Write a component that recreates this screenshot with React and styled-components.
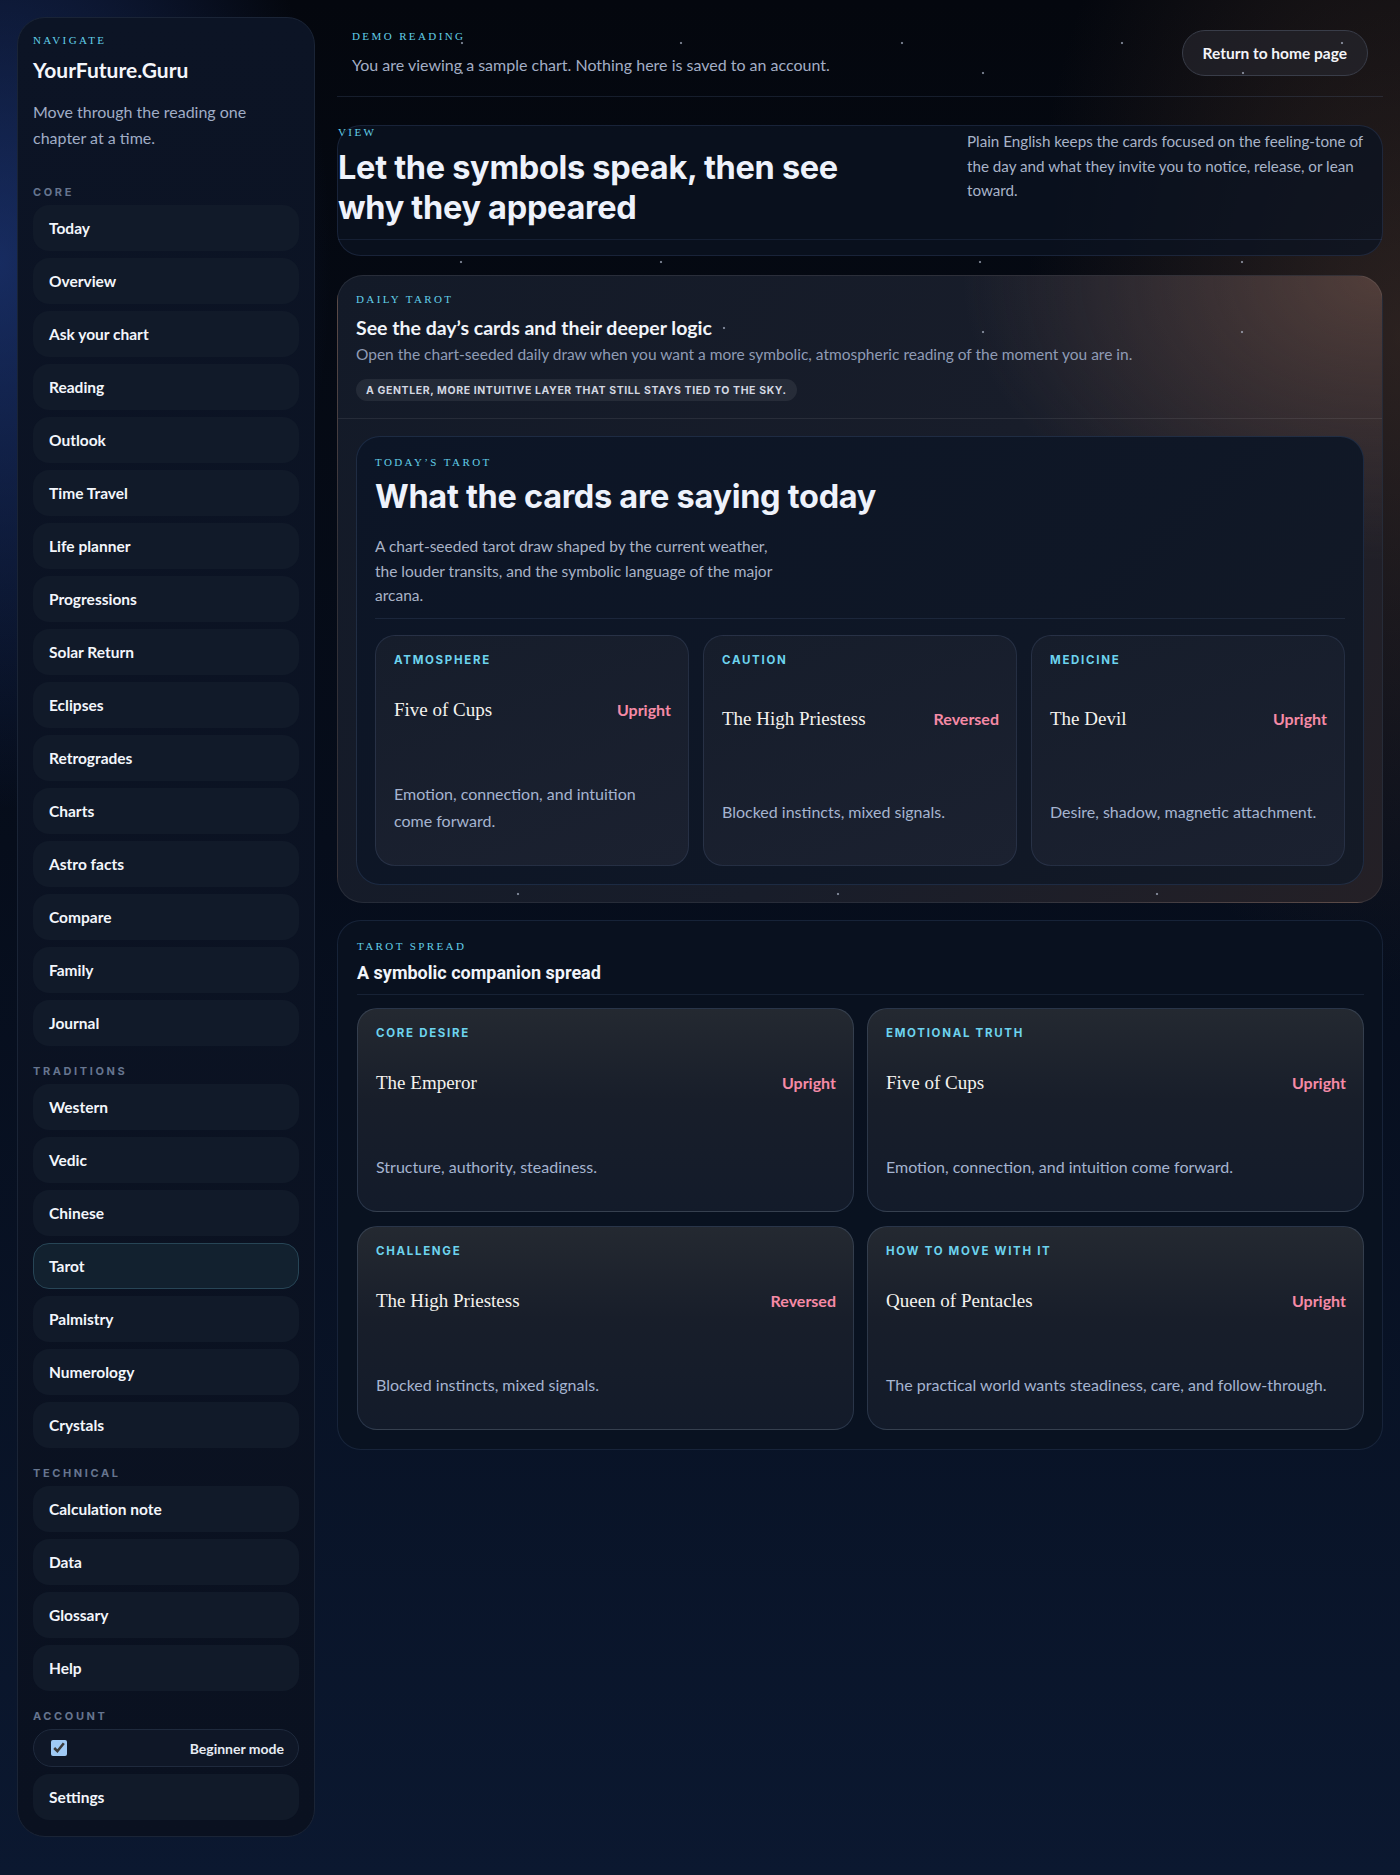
import React from 'react';
import styled, { createGlobalStyle } from 'styled-components';

const SANS = `"Lato", "Noto Sans", sans-serif`;
const HEAD = `"Inter", "Roboto", sans-serif`;
const SUBHEAD = `"Roboto", "Inter", sans-serif`;
const CAPS = `"Inter", "Roboto", sans-serif`;
const SERIF = `"Liberation Serif", "DejaVu Serif", serif`;

const GlobalStyle = createGlobalStyle`
  * { box-sizing: border-box; }
  html, body { margin: 0; padding: 0; }
  body {
    min-height: 1875px;
    font-family: ${SANS};
    color: #eef2f8;
    background:
      radial-gradient(ellipse 460px 760px at 0% 14%, rgba(38, 72, 160, 0.55), transparent 72%),
      radial-gradient(ellipse 520px 900px at 100% 18%, rgba(105, 72, 52, 0.38), transparent 72%),
      linear-gradient(180deg, #04070e 0%, #060d1b 45%, #0b1830 100%);
  }
`;

// tiny star specks that sit over the page
const starSpots = [
  [462, 43], [681, 43], [902, 43], [1122, 43], [1342, 43],
  [462, 73], [983, 73], [1243, 73],
  [461, 262], [661, 262], [980, 262], [1242, 262],
  [724, 328], [983, 332], [1242, 332],
  [518, 894], [838, 894], [1157, 894],
];

const Stars = styled.div`
  position: absolute;
  inset: 0;
  height: 1875px;
  pointer-events: none;
  background-image: ${starSpots
    .map(([x, y]) => `radial-gradient(circle at ${x}px ${y}px, rgba(200, 210, 230, 0.55) 0 1px, transparent 1.6px)`)
    .join(', ')};
  background-repeat: no-repeat;
`;

const Page = styled.div`
  position: relative;
  display: grid;
  grid-template-columns: 298px 1fr;
  column-gap: 22px;
  align-items: start;
  padding: 17px;
`;

/* ---------- Sidebar ---------- */

const Sidebar = styled.nav`
  padding: 16px 15px 16px;
  border-radius: 28px;
  border: 1px solid #1a2436;
  background: linear-gradient(180deg, #0c1425 0%, #0a1120 100%);
`;

const Eyebrow = styled.div`
  font-family: ${SERIF};
  font-size: 11px;
  line-height: 12px;
  letter-spacing: 2.4px;
  text-transform: uppercase;
  color: #62cfe8;
`;

const Brand = styled.div`
  margin-top: 10px;
  font-weight: 700;
  font-size: 21px;
  line-height: 28px;
  color: #f4f6fb;
`;

const SideIntro = styled.p`
  margin: 15px 0 0;
  font-size: 16px;
  line-height: 26px;
  color: #a0adc6;
`;

const GroupLabel = styled.div`
  margin: ${(p) => (p.$first ? '34px' : '18px')} 0 6px;
  font-family: ${CAPS};
  font-weight: 700;
  font-size: 11px;
  line-height: 14px;
  letter-spacing: 2.6px;
  text-transform: uppercase;
  color: #66758f;
`;

const NavList = styled.div`
  display: flex;
  flex-direction: column;
  gap: 7px;
`;

const NavItem = styled.div`
  display: flex;
  align-items: center;
  height: 46px;
  padding: 0 15px;
  border-radius: 16px;
  border: 1px solid ${(p) => (p.$active ? '#274556' : 'transparent')};
  background: ${(p) => (p.$active ? '#12212f' : '#111a29')};
  font-weight: 700;
  font-size: 15.5px;
  color: #f3f6fb;
`;

const ToggleRow = styled.label`
  display: flex;
  align-items: center;
  justify-content: space-between;
  height: 38px;
  padding: 0 14px 0 17px;
  border-radius: 19px;
  border: 1px solid #1f2a3d;
  background: #0f1727;
  font-weight: 700;
  font-size: 14px;
  color: #e6ebf3;

  input {
    width: 16px;
    height: 16px;
    margin: 0;
    accent-color: #9fc9f4;
  }
`;

/* ---------- Main ---------- */

const Main = styled.main`
  display: flex;
  flex-direction: column;
  min-width: 0;
`;

const TopBar = styled.header`
  display: flex;
  align-items: center;
  justify-content: space-between;
  padding: 13px 15px 20px;
  border-bottom: 1px solid rgba(110, 140, 190, 0.17);
`;

const DemoText = styled.p`
  margin: 12px 0 0;
  font-size: 16px;
  line-height: 22px;
  color: #a3aec5;
`;

const HomeButton = styled.button`
  height: 46px;
  padding: 0 20px;
  border-radius: 23px;
  border: 1px solid #393d49;
  background: rgba(38, 38, 46, 0.65);
  font-family: ${SANS};
  font-weight: 700;
  font-size: 15.5px;
  color: #f3f4f8;
`;

const ViewPanel = styled.section`
  margin-top: 28px;
  border-radius: 24px;
  border: 1px solid rgba(100, 130, 190, 0.18);
  background: rgba(11, 19, 34, 0.75);
`;

const ViewGrid = styled.div`
  display: grid;
  grid-template-columns: 1fr 415px;
  padding-bottom: 11px;
  margin-bottom: 15px;
  border-bottom: 1px solid rgba(100, 130, 190, 0.14);
`;

const BigTitle = styled.h1`
  margin: ${(p) => p.$top || '10px'} 0 0;
  max-width: 510px;
  font-family: ${HEAD};
  font-weight: 700;
  font-size: 32.5px;
  line-height: 40px;
  letter-spacing: -0.3px;
  color: #eef2fb;
`;

const ViewNote = styled.p`
  margin: 3px 0 0;
  padding-right: 12px;
  font-size: 15.2px;
  line-height: 24.5px;
  color: #a8b3c8;
`;

const DailyPanel = styled.section`
  margin-top: 19px;
  border-radius: 26px;
  border: 1px solid rgba(255, 255, 255, 0.08);
  overflow: hidden;
  background:
    radial-gradient(ellipse 560px 380px at 100% 0%, rgba(125, 88, 72, 0.55), transparent 75%),
    linear-gradient(120deg, #131a28 0%, #181d2a 55%, #242026 100%);
`;

const DailyHeader = styled.div`
  padding: 17px 19px 17px 18px;
  border-bottom: 1px solid rgba(255, 255, 255, 0.08);
`;

const SectionTitle = styled.h2`
  margin: ${(p) => p.$top || '11px'} 0 0;
  font-family: ${(p) => (p.$head ? SUBHEAD : SANS)};
  font-weight: 700;
  font-size: ${(p) => (p.$head ? '18px' : '19.5px')};
  line-height: 24px;
  color: #f1f4fa;
`;

const DailyDesc = styled.p`
  margin: 3px 0 0;
  font-size: 15.5px;
  line-height: 22px;
  color: #8f9bb5;
`;

const Pill = styled.span`
  display: inline-flex;
  align-items: center;
  height: 22px;
  margin-top: 14px;
  padding: 0 10px;
  border-radius: 11px;
  background: rgba(255, 255, 255, 0.07);
  font-family: ${CAPS};
  font-weight: 700;
  font-size: 10.5px;
  letter-spacing: 0.6px;
  text-transform: uppercase;
  color: #d3d8e2;
`;

const DailyBody = styled.div`
  padding: 17px 18px;
`;

const TodayCard = styled.div`
  padding: 19px 18px 18px;
  border-radius: 24px;
  border: 1px solid rgba(100, 140, 200, 0.18);
  background: linear-gradient(135deg, #0c1526 0%, #0f1726 60%, #141a26 100%);
`;

const TodayIntro = styled.div`
  padding-bottom: 10px;
  border-bottom: 1px solid rgba(110, 140, 190, 0.14);
`;

const TodayText = styled.p`
  margin: 17px 0 0;
  max-width: 410px;
  font-size: 15.5px;
  line-height: 24.5px;
  color: #a9b3c6;
`;

const CardGrid = styled.div`
  display: grid;
  grid-template-columns: repeat(${(p) => p.$cols}, 1fr);
  column-gap: ${(p) => (p.$cols === 3 ? '14px' : '13px')};
  row-gap: 14px;
  margin-top: ${(p) => p.$top};
`;

const SpreadPanel = styled.section`
  margin-top: 17px;
  padding: 19px 18px 19px 19px;
  border-radius: 24px;
  border: 1px solid rgba(100, 130, 190, 0.16);
  background: rgba(10, 18, 32, 0.82);
`;

const SpreadHeader = styled.div`
  padding-bottom: 9px;
  border-bottom: 1px solid rgba(110, 140, 190, 0.14);
`;

/* ---------- Tarot card ---------- */

const Card = styled.div`
  display: grid;
  padding: 16px 17px 16px 18px;
  border-radius: 20px;
  border: 1px solid ${(p) => (p.$lit ? 'rgba(130, 160, 200, 0.2)' : 'rgba(120, 150, 200, 0.15)')};
  background: ${(p) =>
    p.$lit
      ? 'linear-gradient(180deg, #242931 0%, #181e2a 45%, #131b2a 100%)'
      : 'linear-gradient(160deg, #161d2b 0%, #1b2130 100%)'};
`;

const CardLabel = styled.div`
  font-family: ${CAPS};
  font-weight: 700;
  font-size: 11.5px;
  line-height: 16px;
  letter-spacing: 1.7px;
  text-transform: uppercase;
  color: #6dd3ee;
`;

const CardHead = styled.div`
  display: flex;
  align-items: center;
  justify-content: space-between;
  height: 28px;
  margin-top: 28px;
`;

const CardName = styled.span`
  font-family: ${SERIF};
  font-size: 19px;
  color: #f4f2ee;
`;

const Orientation = styled.span`
  font-weight: 700;
  font-size: 16px;
  color: #f58aa6;
`;

const CardText = styled.p`
  margin: 56px 0 15px;
  max-width: ${(p) => (p.$narrow ? '274px' : 'none')};
  font-size: 16px;
  line-height: 27px;
  color: #a5b4d0;
`;

function TarotCard({ label, name, orientation, text, lit, narrow }) {
  return (
    <Card $lit={lit}>
      <CardLabel>{label}</CardLabel>
      <CardHead>
        <CardName>{name}</CardName>
        <Orientation>{orientation}</Orientation>
      </CardHead>
      <CardText $narrow={narrow}>{text}</CardText>
    </Card>
  );
}

/* ---------- Data ---------- */

const navGroups = [
  {
    label: 'Core',
    items: ['Today', 'Overview', 'Ask your chart', 'Reading', 'Outlook', 'Time Travel', 'Life planner',
      'Progressions', 'Solar Return', 'Eclipses', 'Retrogrades', 'Charts', 'Astro facts', 'Compare',
      'Family', 'Journal'],
  },
  { label: 'Traditions', items: ['Western', 'Vedic', 'Chinese', 'Tarot', 'Palmistry', 'Numerology', 'Crystals'] },
  { label: 'Technical', items: ['Calculation note', 'Data', 'Glossary', 'Help'] },
];

const todayCards = [
  { label: 'Atmosphere', name: 'Five of Cups', orientation: 'Upright', text: 'Emotion, connection, and intuition come forward.' },
  { label: 'Caution', name: 'The High Priestess', orientation: 'Reversed', text: 'Blocked instincts, mixed signals.' },
  { label: 'Medicine', name: 'The Devil', orientation: 'Upright', text: 'Desire, shadow, magnetic attachment.' },
];

const spreadCards = [
  { label: 'Core desire', name: 'The Emperor', orientation: 'Upright', text: 'Structure, authority, steadiness.' },
  { label: 'Emotional truth', name: 'Five of Cups', orientation: 'Upright', text: 'Emotion, connection, and intuition come forward.' },
  { label: 'Challenge', name: 'The High Priestess', orientation: 'Reversed', text: 'Blocked instincts, mixed signals.' },
  { label: 'How to move with it', name: 'Queen of Pentacles', orientation: 'Upright', text: 'The practical world wants steadiness, care, and follow-through.' },
];

export default function App() {
  return (
    <>
      <GlobalStyle />
      <Page>
        <Sidebar>
          <Eyebrow>Navigate</Eyebrow>
          <Brand>YourFuture.Guru</Brand>
          <SideIntro>Move through the reading one chapter at a time.</SideIntro>
          {navGroups.map((group, i) => (
            <div key={group.label}>
              <GroupLabel $first={i === 0}>{group.label}</GroupLabel>
              <NavList>
                {group.items.map((item) => (
                  <NavItem key={item} $active={item === 'Tarot'}>{item}</NavItem>
                ))}
              </NavList>
            </div>
          ))}
          <GroupLabel>Account</GroupLabel>
          <NavList>
            <ToggleRow>
              <input type="checkbox" defaultChecked />
              <span>Beginner mode</span>
            </ToggleRow>
            <NavItem>Settings</NavItem>
          </NavList>
        </Sidebar>

        <Main>
          <TopBar>
            <div>
              <Eyebrow>Demo reading</Eyebrow>
              <DemoText>You are viewing a sample chart. Nothing here is saved to an account.</DemoText>
            </div>
            <HomeButton>Return to home page</HomeButton>
          </TopBar>

          <ViewPanel>
            <ViewGrid>
              <div>
                <Eyebrow>View</Eyebrow>
                <BigTitle>Let the symbols speak, then see why they appeared</BigTitle>
              </div>
              <ViewNote>
                Plain English keeps the cards focused on the feeling-tone of the day and what they invite you to
                notice, release, or lean toward.
              </ViewNote>
            </ViewGrid>
          </ViewPanel>

          <DailyPanel>
            <DailyHeader>
              <Eyebrow>Daily tarot</Eyebrow>
              <SectionTitle>See the day’s cards and their deeper logic</SectionTitle>
              <DailyDesc>
                Open the chart-seeded daily draw when you want a more symbolic, atmospheric reading of the moment you are in.
              </DailyDesc>
              <Pill>A gentler, more intuitive layer that still stays tied to the sky.</Pill>
            </DailyHeader>
            <DailyBody>
              <TodayCard>
                <TodayIntro>
                  <Eyebrow>Today’s tarot</Eyebrow>
                  <BigTitle $top="9px">What the cards are saying today</BigTitle>
                  <TodayText>
                    A chart-seeded tarot draw shaped by the current weather, the louder transits, and the symbolic
                    language of the major arcana.
                  </TodayText>
                </TodayIntro>
                <CardGrid $cols={3} $top="16px">
                  {todayCards.map((c) => (
                    <TarotCard key={c.label} {...c} narrow />
                  ))}
                </CardGrid>
              </TodayCard>
            </DailyBody>
          </DailyPanel>

          <SpreadPanel>
            <SpreadHeader>
              <Eyebrow>Tarot spread</Eyebrow>
              <SectionTitle $head $top="9px">A symbolic companion spread</SectionTitle>
            </SpreadHeader>
            <CardGrid $cols={2} $top="13px">
              {spreadCards.map((c) => (
                <TarotCard key={c.label} {...c} lit />
              ))}
            </CardGrid>
          </SpreadPanel>
        </Main>
        <Stars />
      </Page>
    </>
  );
}
